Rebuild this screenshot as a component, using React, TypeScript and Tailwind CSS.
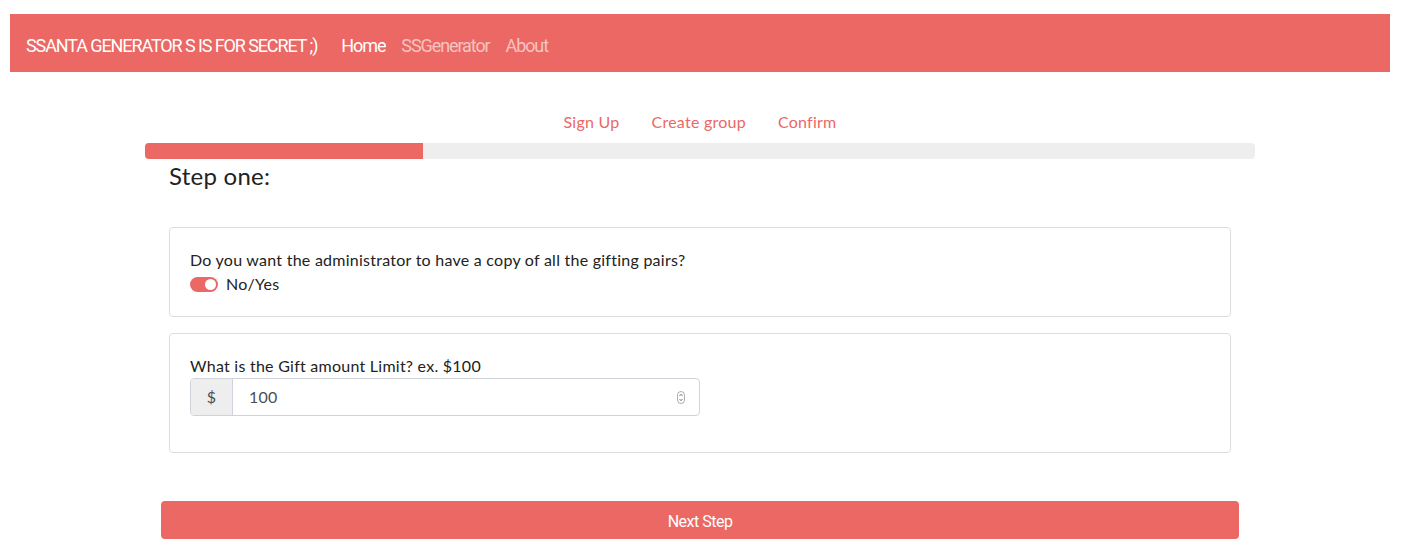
import React from "react";

const cond = { fontFamily: 'Roboto, "Liberation Sans", sans-serif' } as React.CSSProperties;

export default function App() {
  return (
    <div className="w-[1400px] bg-white text-[#222] pt-[14px] tracking-[0.25px]" style={{ fontFamily: 'Lato, "Noto Sans", sans-serif' }}>
      <nav className="mx-[10px] h-[58px] bg-[#eb6864] flex items-center pl-[16px] pt-[5px] tracking-[-1.1px]" style={cond}>
        <span className="text-white text-[18px] mr-[24px]">SSANTA GENERATOR S IS FOR SECRET ;)</span>
        <span className="text-white text-[18px] mr-[16px]">Home</span>
        <span className="text-[#f7c3c1] text-[18px] mr-[16px]">SSGenerator</span>
        <span className="text-[#f7c3c1] text-[18px]">About</span>
      </nav>

      <div className="w-[1110px] mx-auto">
        <div className="flex justify-center gap-[32px] mt-[38px] h-[24px] items-center text-[#eb6864] text-[16px]">
          <span>Sign Up</span>
          <span>Create group</span>
          <span>Confirm</span>
        </div>
        <div className="mt-[9px] h-[16px] bg-[#eeeeee] rounded-[4px] overflow-hidden flex">
          <div className="w-1/4 bg-[#eb6864]" />
        </div>

        <div className="px-[24px]">
          <h2 className="text-[24px] mt-[2px] leading-[30px]">Step one:</h2>

          <div className="mt-[36px] border border-[#dddddd] rounded-[4px] px-[20px] py-[20px]">
            <div className="text-[16px] leading-[24px]">Do you want the administrator to have a copy of all the gifting pairs?</div>
            <div className="flex items-center h-[24px]">
              <div className="w-[28px] h-[15px] rounded-full bg-[#eb6864] flex items-center justify-end pr-[2px]">
                <div className="w-[11px] h-[11px] rounded-full bg-white" />
              </div>
              <span className="ml-[8px] text-[16px]">No/Yes</span>
            </div>
          </div>

          <div className="mt-[16px] border border-[#dddddd] rounded-[4px] px-[20px] pt-[20px] pb-[36px]">
            <div className="text-[16px] leading-[24px]">What is the Gift amount Limit? ex. $100</div>
            <div className="flex w-[510px] h-[38px] border border-[#ced4da] rounded-[4px] overflow-hidden">
              <div className="w-[42px] bg-[#eeeeee] border-r border-[#ced4da] flex items-center justify-center text-[16px] text-[#495057]">$</div>
              <div className="flex-1 flex items-center pl-[16px] pr-[14px] text-[16px] text-[#495057]">
                <span className="flex-1">100</span>
                <svg width="8" height="13" viewBox="0 0 8 13">
                  <rect x="0.5" y="0.5" width="7" height="12" rx="3.5" fill="none" stroke="#9a9a9a" strokeWidth="0.8" />
                  <path d="M2.5 5 L4 3.3 L5.5 5" fill="none" stroke="#555" strokeWidth="0.8" />
                  <path d="M2.5 8 L4 9.7 L5.5 8" fill="none" stroke="#555" strokeWidth="0.8" />
                </svg>
              </div>
            </div>
          </div>
        </div>

        <div className="px-[16px] mt-[48px] pb-[16px]">
          <button className="w-full h-[38px] bg-[#eb6864] rounded-[4px] text-white text-[16px] tracking-[-0.5px] pt-[3px]" style={cond}>Next Step</button>
        </div>
      </div>
    </div>
  );
}
